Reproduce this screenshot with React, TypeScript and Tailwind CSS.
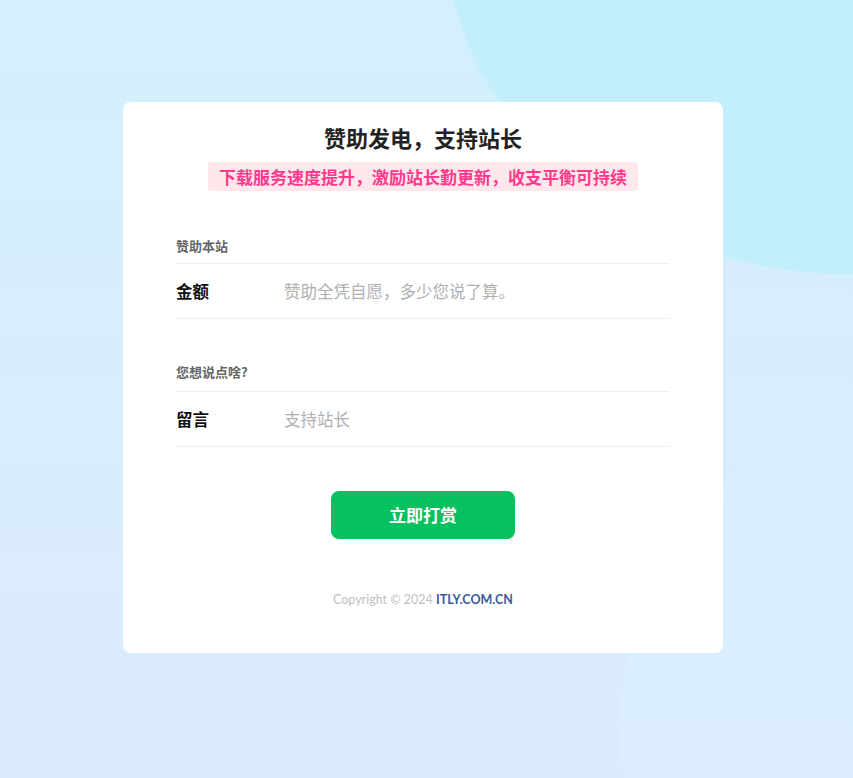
export default function App() {
  return (
    <div
      className="relative min-h-[778px] w-full overflow-hidden bg-gradient-to-b from-[#d3f0fc] to-[#dceafd]"
      style={{ fontFamily: '"Noto Sans CJK SC", "Noto Sans", sans-serif' }}
    >
      {/* background blobs */}
      <div className="pointer-events-none absolute left-[440px] top-[-490px] h-[760px] w-[900px] rounded-[50%] bg-[#c3eefb] rotate-[-14deg]" />
      <div className="pointer-events-none absolute left-[620px] top-[380px] h-[700px] w-[700px] rounded-full bg-[#dcf0fd]/70" />

      <div className="relative flex pt-[102px]">
        <div className="ml-[123px] w-[600px] rounded-lg bg-white px-[53px] pb-[43px] pt-[20px]">
          <h1 className="text-center text-[22px] font-bold leading-[30px] text-[#222]">
            赞助发电，支持站长
          </h1>
          <div className="mt-[10px] flex justify-center">
            <span className="rounded-[3px] bg-[#ffe8ec] px-[11px] py-[1px] text-[17px] font-bold leading-[27px] text-[#ff3a8c]">
              下载服务速度提升，激励站长勤更新，收支平衡可持续
            </span>
          </div>

          <div className="mt-[46px]">
            <div className="pb-[8px] text-[13px] font-bold leading-[18px] text-[#666]">赞助本站</div>
            <div className="flex h-[56px] items-center border-y border-[#eeeeee]">
              <span className="w-[108px] text-[16.5px] font-bold text-[#111]">金额</span>
              <span className="text-[16.5px] text-[#b0b0b0]">赞助全凭自愿，多少您说了算。</span>
            </div>
          </div>

          <div className="mt-[44px]">
            <div className="pb-[10px] text-[13px] font-bold leading-[18px] text-[#666]">您想说点啥?</div>
            <div className="flex h-[56px] items-center border-y border-[#eeeeee]">
              <span className="w-[108px] text-[16.5px] font-bold text-[#111]">留言</span>
              <span className="text-[16.5px] text-[#b0b0b0]">支持站长</span>
            </div>
          </div>

          <div className="mt-[44px] flex justify-center">
            <button className="h-[48px] w-[184px] rounded-lg bg-[#07c160] text-[17px] font-bold text-white">
              立即打赏
            </button>
          </div>

          <div
            className="mt-[52px] text-center text-[12.5px] text-[#c0c0c0]"
            style={{ fontFamily: 'Lato, "Noto Sans", sans-serif' }}
          >
            Copyright © 2024 <span className="font-bold text-[#3b5a9a]">ITLY.COM.CN</span>
          </div>
        </div>
      </div>
    </div>
  );
}
